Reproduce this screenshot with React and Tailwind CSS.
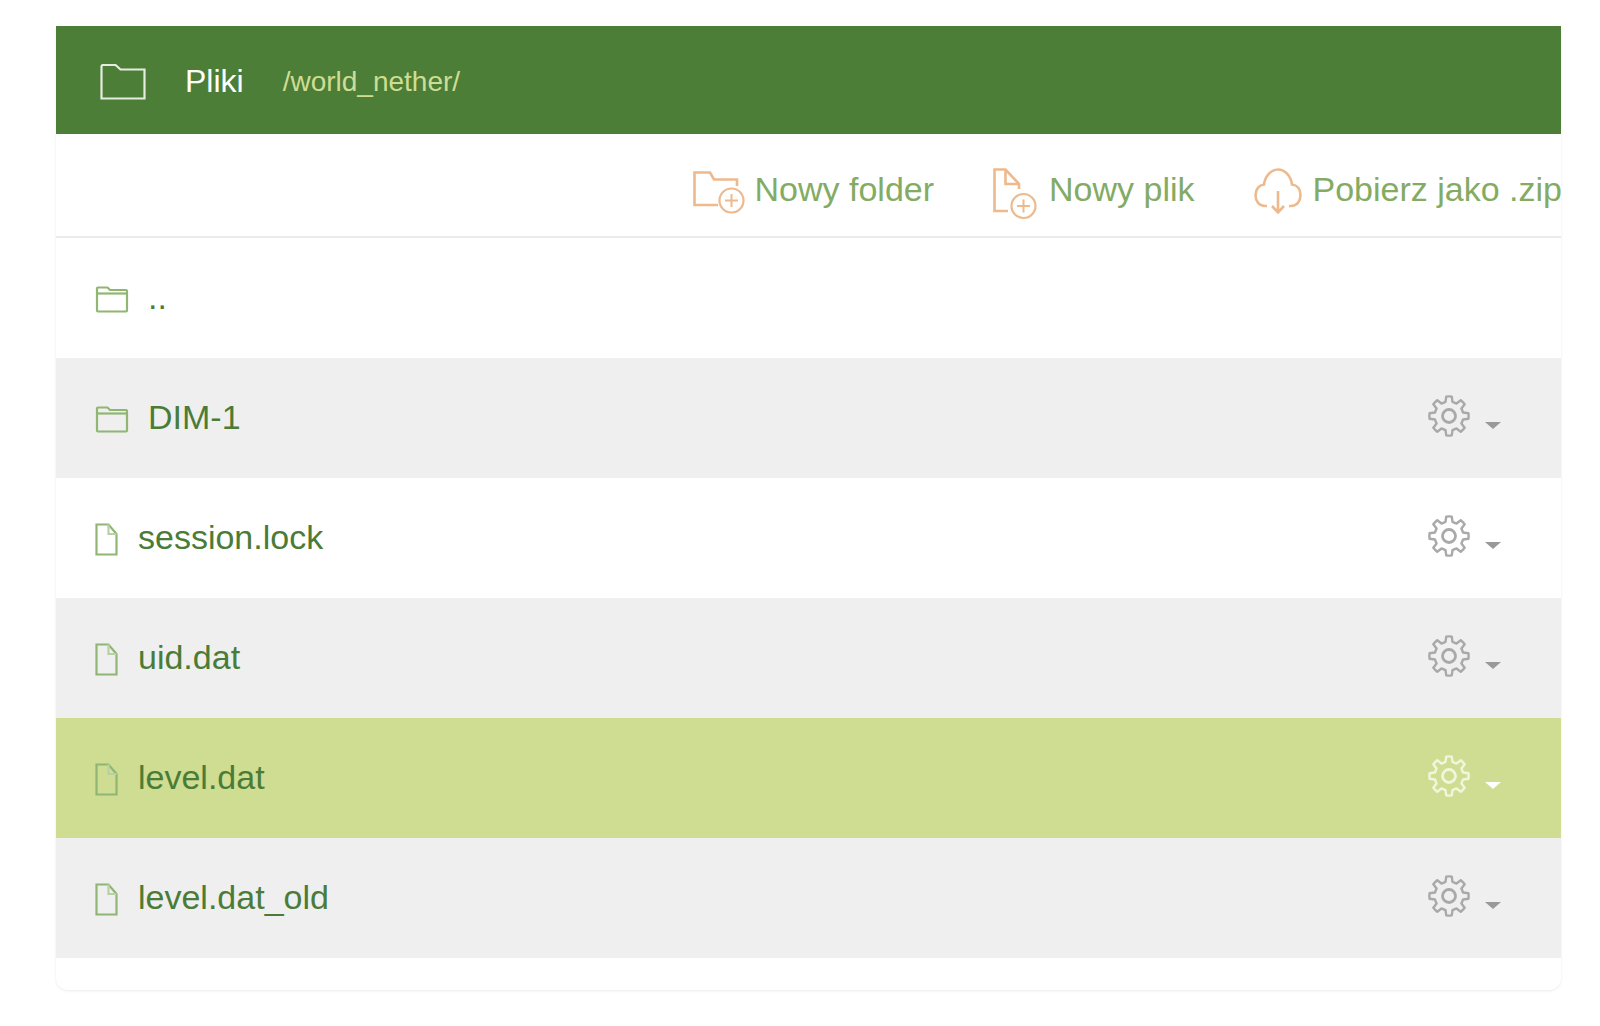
import React from "react";

const FolderIcon = () => (
  <svg width="34" height="27" viewBox="0 0 34 27" fill="none" className="stroke-[#8fb673] mt-[3px]" strokeWidth="2.200">
    <path d="M2 4V24.500a1 1 0 0 0 1 1H31a1 1 0 0 0 1-1V5a1 1 0 0 0-1-1H15L12.500 1.500H3A1 1 0 0 0 2 2.500Z" />
    <path d="M2 7.500H32" />
  </svg>
);

const FileIcon = () => (
  <svg width="23" height="33" viewBox="0 0 23 33" fill="none" className="stroke-[#8fb673] mt-[3px]" strokeWidth="2.200">
    <path d="M1.500 1.500H13.500L21.500 11V31.500H1.500Z" />
    <path d="M13.500 1.500V11H21.500" className="stroke-[#b9d0a6]" />
  </svg>
);

const Gear = ({ className }) => {
  const teeth = [];
  const n = 8;
  for (let i = 0; i < n; i++) {
    const a = (i / n) * Math.PI * 2 - Math.PI / 2;
    const w = Math.PI / n;
    const pt = (r, t) => `${(21 + r * Math.cos(t)).toFixed(2)} ${(21 + r * Math.sin(t)).toFixed(2)}`;
    teeth.push(
      `${i === 0 ? "M" : "L"}${pt(14.500, a - w * 0.62)}`,
      `L${pt(19.600, a - w * 0.36)}`,
      `A19.600 19.600 0 0 1 ${pt(19.600, a + w * 0.36)}`,
      `L${pt(14.500, a + w * 0.62)}`
    );
  }
  return (
    <svg width="42" height="42" viewBox="0 0 42 42" fill="none" strokeWidth="2.400" strokeLinejoin="round" className={className}>
      <path d={teeth.join(" ") + " Z"} />
      <circle cx="21" cy="21" r="6.500" strokeWidth="2.800" />
    </svg>
  );
};

const files = [
  { name: "..", type: "folder", up: true },
  { name: "DIM-1", type: "folder" },
  { name: "session.lock", type: "file" },
  { name: "uid.dat", type: "file" },
  { name: "level.dat", type: "file", active: true },
  { name: "level.dat_old", type: "file" },
];

const rowBg = (f, i) => {
  if (f.active) return "bg-[#cedd92]";
  return i % 2 === 1 ? "bg-[#efefef]" : "bg-white";
};

const App = () => {
  return (
    <div className="w-[1600px] h-[1026px] bg-white pt-[26px] pl-[56px] font-['Liberation_Sans',Arial,sans-serif]">
      <div className="w-[1505px] h-[964px] rounded-b-xl shadow-[0_1px_3px_rgba(0,0,0,0.08)] bg-white">
        <div className="h-[108px] bg-[#4c7e38] flex items-center pl-[44px]">
          <svg width="46" height="36" viewBox="0 0 46 36" fill="none" stroke="#e6ecdf" strokeWidth="2.200" className="mt-[4px]">
            <path d="M1.500 34.500V2.500A1.500 1.500 0 0 1 3 1H15.500L20.500 5.500H44.500V34.500Z" />
          </svg>
          <span className="ml-[39px] text-[32px] text-white mt-[2px]">Pliki</span>
          <span className="ml-[39px] text-[28px] text-[#cfdd93] mt-[4px]">/world_nether/</span>
        </div>

        <div className="h-[104px] pt-[8px] border-b-2 border-[#ebebeb] flex items-center justify-end gap-[59px] text-[34px] text-[#84ab64] whitespace-nowrap">
          <button className="flex items-center gap-[10px]">
            <svg width="52" height="43" viewBox="0 0 52 43" fill="none" stroke="#eeb98c" strokeWidth="2.600" className="mt-[6px]">
              <path d="M25 34H1.500V1.500H17L21 8.500H44V15" />
              <circle cx="38.500" cy="29.500" r="12" strokeWidth="2.200" />
              <path d="M38.500 23V36M32 29.500H45" strokeWidth="2" />
            </svg>
            Nowy folder
          </button>
          <button className="flex items-center gap-[12px]">
            <svg width="44" height="52" viewBox="0 0 44 52" fill="none" stroke="#eeb98c" strokeWidth="2.600" className="mt-[9px]">
              <path d="M15 43H1.500V1.500H12.500L26 16V21" />
              <path d="M12.500 2V16H26" />
              <circle cx="30.500" cy="38" r="12" strokeWidth="2.200" />
              <path d="M30.500 31.500V44.500M24 38H37" strokeWidth="2" />
            </svg>
            Nowy plik
          </button>
          <button className="flex items-center gap-[11px] mr-[-1px]">
            <svg width="48" height="46" viewBox="0 0 48 46" fill="none" stroke="#eeb98c" strokeWidth="2.600" className="mt-[3px]">
              <path d="M13 38H11C5 38 1.500 33 1.500 27C1.500 21 5.500 17 10 16.500C11 8 17 1.500 24 1.500C31 1.500 37 8 38 16.500C43 17 46.500 21 46.500 27C46.500 33 43 38 37 38H35" />
              <path d="M24 23V44M18 38L24 44.500L30 38" />
            </svg>
            Pobierz jako .zip
          </button>
        </div>

        {files.map((f, i) => (
          <div key={f.name} className={`h-[120px] flex items-center pl-[39px] pr-[60px] text-[34px] text-[#4a7c37] ${rowBg(f, i)}`}>
            {f.type === "folder" ? <FolderIcon /> : <FileIcon />}
            <span className={`pb-[2px] ${f.type === "folder" ? "ml-[19px]" : "ml-[20px]"}`}>{f.name}</span>
            {!f.up && (
              <div className="ml-auto flex items-center pb-[4px]">
                <Gear className={f.active ? "stroke-[#f1f5dc]" : "stroke-[#a9a9a9]"} />
                <span
                  className={`ml-[15px] mt-[18px] w-0 h-0 border-x-[8px] border-x-transparent border-t-[7px] ${
                    f.active ? "border-t-white" : "border-t-[#999999]"
                  }`}
                />
              </div>
            )}
          </div>
        ))}
      </div>
    </div>
  );
};

export default App;
